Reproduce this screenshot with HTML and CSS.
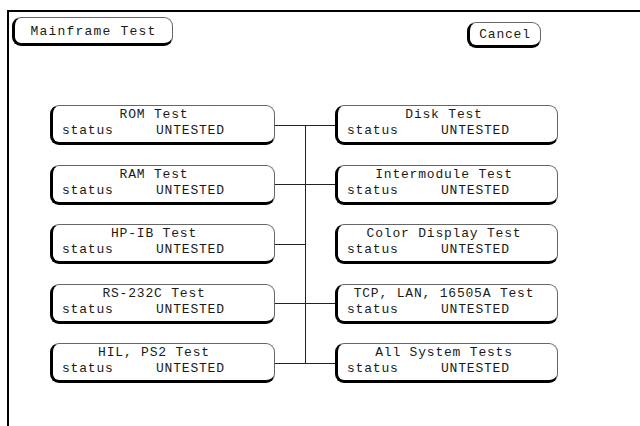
FILE: index.html
```html
<!DOCTYPE html>
<html lang="en">
<head>
  <meta charset="UTF-8" />
  <title>Mainframe Test</title>
  <link rel="stylesheet" href="styles.css">
</head>
<body>
  <div class="frame">
    <div class="header">
      <div class="btn btn-title">Mainframe Test</div>
      <div class="btn btn-cancel">Cancel</div>
    </div>

    <div class="diagram">
      <div class="col col-left">
        <div class="box"><div class="title">ROM Test</div><div class="status"><span class="label">status</span>UNTESTED</div></div>
        <div class="box"><div class="title">RAM Test</div><div class="status"><span class="label">status</span>UNTESTED</div></div>
        <div class="box"><div class="title">HP-IB Test</div><div class="status"><span class="label">status</span>UNTESTED</div></div>
        <div class="box"><div class="title">RS-232C Test</div><div class="status"><span class="label">status</span>UNTESTED</div></div>
        <div class="box"><div class="title">HIL, PS2 Test</div><div class="status"><span class="label">status</span>UNTESTED</div></div>
      </div>

      <!-- Verbindungen: links / rechts je Zeile -->
      <div class="bus">
        <div class="link"><span class="wire"></span><span class="wire"></span></div>
        <div class="link"><span class="wire"></span><span class="wire"></span></div>
        <div class="link"><span class="wire"></span><span class="wire off"></span></div>
        <div class="link"><span class="wire"></span><span class="wire"></span></div>
        <div class="link"><span class="wire"></span><span class="wire"></span></div>
      </div>

      <div class="col col-right">
        <div class="box"><div class="title">Disk Test</div><div class="status"><span class="label">status</span>UNTESTED</div></div>
        <div class="box"><div class="title">Intermodule Test</div><div class="status"><span class="label">status</span>UNTESTED</div></div>
        <div class="box"><div class="title">Color Display Test</div><div class="status"><span class="label">status</span>UNTESTED</div></div>
        <div class="box"><div class="title">TCP, LAN, 16505A Test</div><div class="status"><span class="label">status</span>UNTESTED</div></div>
        <div class="box"><div class="title">All System Tests</div><div class="status"><span class="label">status</span>UNTESTED</div></div>
      </div>
    </div>
  </div>
</body>
</html>
```

FILE: styles.css
```css
body {
  margin: 0;
  background: #fff;
  color: #1a1a1a;
  font-family: "Liberation Mono", "DejaVu Sans Mono", monospace;
  font-size: 13px;
  overflow: hidden;
}
.frame {
  margin: 10px 0 0 7px;
  height: 416px;
  border-top: 2px solid #000;
  border-left: 2px solid #000;
}
.header {
  display: flex;
  align-items: flex-start;
  padding: 5px 0 0 3px;
}
.btn {
  box-sizing: border-box;
  border: 1px solid #666;
  border-left: 3px solid #000;
  border-bottom: 3px solid #000;
  border-radius: 9px;
  text-align: center;
  letter-spacing: 1.2px;
}
.btn-title {
  width: 161px;
  height: 29px;
  line-height: 27px;
}
.btn-cancel {
  width: 74px;
  height: 26px;
  line-height: 23px;
  margin: 5px 0 0 294px;
  letter-spacing: 0.8px;
}
.diagram {
  display: grid;
  grid-template-columns: 225px 60px 223px;
  margin: 57px 0 0 41px;
}
.col, .bus {
  display: flex;
  flex-direction: column;
  gap: 19.5px;
}
.box {
  box-sizing: border-box;
  height: 40px;
  padding: 1px 0 0 9px;
  border: 1px solid #666;
  border-left: 3px solid #000;
  border-bottom: 3px solid #000;
  border-radius: 9px;
  line-height: 16px;
  letter-spacing: 0.8px;
  white-space: pre;
}
.col-left .title {
  padding-right: 28px;
  text-align: center;
}
.col-right .title {
  padding-right: 16px;
  text-align: center;
}
.status {
  display: flex;
}
.label {
  width: 94px;
}
.bus {
  background: linear-gradient(#222, #222) no-repeat 30px 20px / 1px calc(100% - 40px);
}
.link {
  display: flex;
  height: 40px;
}
.wire {
  flex: 1;
  background: linear-gradient(#222, #222) no-repeat center / 100% 1px;
}
.wire.off {
  background: none;
}
```
